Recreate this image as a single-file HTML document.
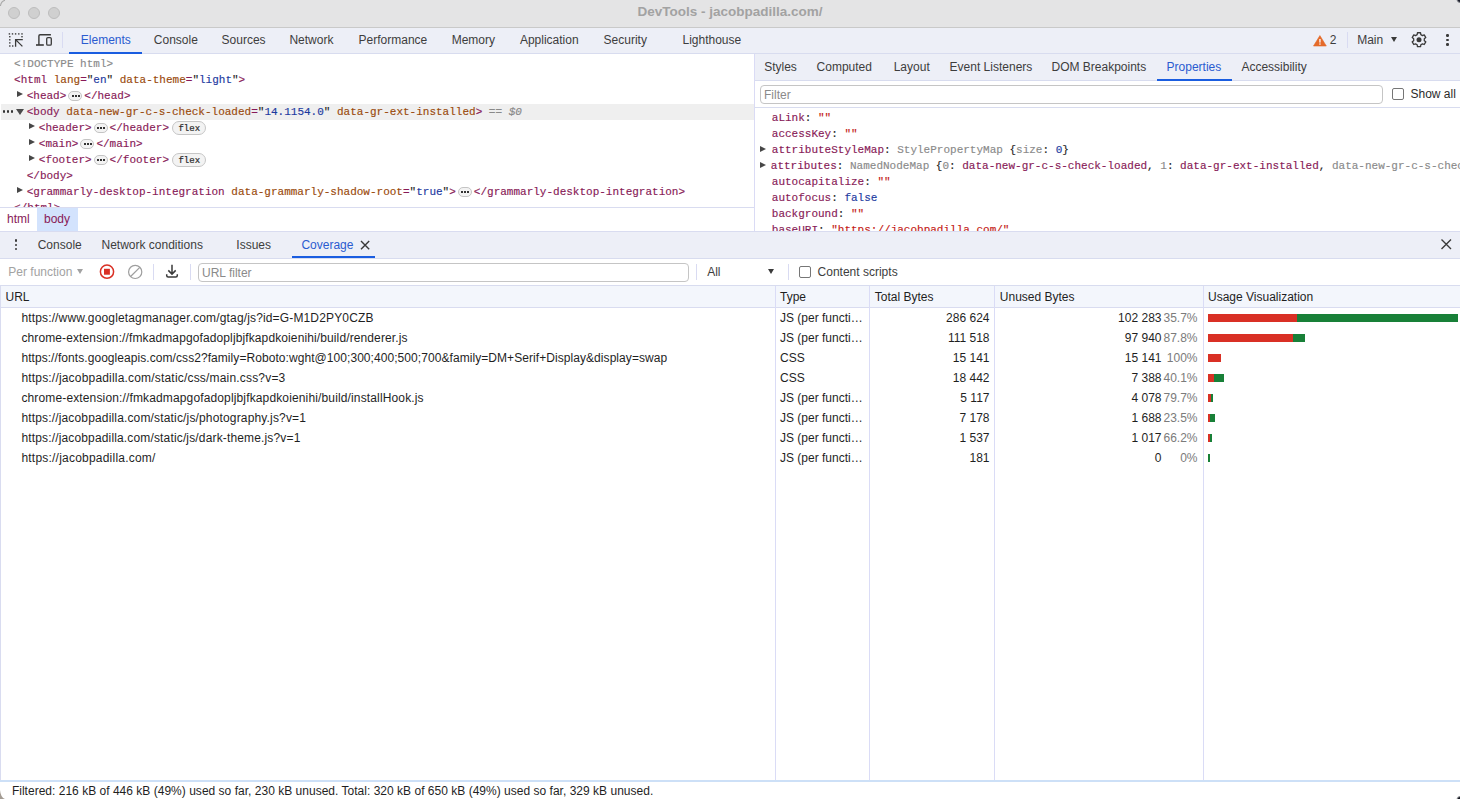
<!DOCTYPE html><html><head><meta charset="utf-8"><style>
*{box-sizing:border-box;margin:0;padding:0}
html,body{width:1460px;height:799px;overflow:hidden;background:#fff}
body{position:relative;font-family:"Liberation Sans",sans-serif;font-size:12px;color:#1f1f1f}
.a{position:absolute}
svg.a{overflow:visible}
.t{position:absolute;white-space:pre;line-height:14px;height:14px}
.tl{position:absolute;top:7px;width:12px;height:12px;border-radius:50%;background:#d0d0d0;border:1px solid #bdbdbd}
.tab{color:#3d3d3d}
.sel{color:#2a5bd0}
.ul{position:absolute;height:2px;background:#1a5de0}
.vsep{position:absolute;width:1px;background:#d9dbf2}
.row{position:absolute;height:16px;line-height:16px;white-space:pre;font-family:"Liberation Mono",monospace;font-size:11px;-webkit-text-stroke:0.15px currentColor}
.tg{color:#881a57}
.an{color:#9a4a0c}
.av{color:#1d3a9f}
.gr{color:#8a8a8a}
.dk{color:#303030}
.pn{color:#881a57}
.sv{color:#c41a16}
.nv{color:#1d3a9f}
.tri{position:absolute;width:0;height:0;border-top:3.9px solid transparent;border-bottom:3.9px solid transparent;border-left:6.3px solid #474747}
.trid{position:absolute;width:0;height:0;border-left:4px solid transparent;border-right:4px solid transparent;border-top:6px solid #4a4a4a}
.pill{display:inline-block;position:relative;vertical-align:top;margin:3px 2px 0 2px;width:14px;height:10px;border:1px solid #c4c4c4;border-radius:5px;background:#f3f3f3;-webkit-text-stroke:0}
.pill:after{content:"";position:absolute;left:2.6px;top:3px;width:2px;height:2px;background:#333;box-shadow:3px 0 0 #333,6px 0 0 #333}
.flex{position:absolute;width:34px;height:14px;border:1px solid #c6c6c6;border-radius:7px;background:#f3f3f3;font-family:"Liberation Mono",monospace;font-size:9px;line-height:14.4px;text-align:center;color:#2a2a2a;-webkit-text-stroke:0.2px #2a2a2a;padding-left:0.5px}
.cell{position:absolute;white-space:pre;line-height:14px;height:14px;color:#1f1f1f}
.r{text-align:right}
.pct{color:#7b7b7b}
.bar{position:absolute;height:8px}
</style></head><body>
<div class="a" style="left:0;top:0;width:1460px;height:28px;background:#e4e4e5;border-bottom:1px solid #c9c9c9"></div>
<div class="tl" style="left:8px"></div>
<div class="tl" style="left:28px"></div>
<div class="tl" style="left:48px"></div>
<div class="t" style="left:0;width:1460px;text-align:center;top:5px;font-weight:bold;font-size:13.5px;color:#a2a2a2">DevTools - jacobpadilla.com/</div>
<svg class="a" style="left:0;top:0" width="10" height="10"><path d="M0.4 6 Q1.2 1.2 5 0.3" stroke="#a9a9a9" stroke-width="1.1" fill="none"/></svg>
<div class="a" style="left:1456px;top:-2px;width:6px;height:5px;border-radius:50%;background:radial-gradient(circle at 70% 30%,#1a1d2a 0,#1a1d2a 35%,rgba(26,29,42,0) 75%)"></div>
<div class="a" style="left:0;top:28px;width:1460px;height:26px;background:#edeff7;border-bottom:1px solid #d8dcef"></div>
<svg class="a" style="left:0;top:0" width="60" height="54" viewBox="0 0 60 54">
<g fill="#3a3a3a"><rect x="8.700000000000001" y="33.2" width="1.4" height="1.4"/><rect x="11.8" y="33.2" width="1.4" height="1.4"/><rect x="14.9" y="33.2" width="1.4" height="1.4"/><rect x="18.1" y="33.2" width="1.4" height="1.4"/><rect x="21.3" y="33.2" width="1.4" height="1.4"/><rect x="9.1" y="36.0" width="1.4" height="1.4"/><rect x="9.1" y="39.099999999999994" width="1.4" height="1.4"/><rect x="9.1" y="42.199999999999996" width="1.4" height="1.4"/><rect x="9.1" y="45.3" width="1.4" height="1.4"/><rect x="21.3" y="36.0" width="1.4" height="1.4"/><rect x="12.0" y="45.3" width="1.4" height="1.4"/></g>
<path d="M15.6 46.8 V39.6 H22.8 M16.1 40.1 L22.4 46.4" stroke="#3a3a3a" stroke-width="1.3" fill="none"/>
<path d="M38.9 45 V36 Q38.9 34.8 40.1 34.8 H50.9" stroke="#3a3a3a" stroke-width="1.4" fill="none"/>
<rect x="36" y="44.2" width="7.8" height="1.6" fill="#3a3a3a"/>
<rect x="46.7" y="37.6" width="4.6" height="7.6" rx="1.2" stroke="#3a3a3a" stroke-width="1.3" fill="none"/>
</svg>
<div class="vsep" style="left:62px;top:32px;height:16px"></div>
<div class="t sel" style="left:80.8px;top:33px;">Elements</div>
<div class="t tab" style="left:153.8px;top:33px;">Console</div>
<div class="t tab" style="left:221.6px;top:33px;">Sources</div>
<div class="t tab" style="left:289.4px;top:33px;">Network</div>
<div class="t tab" style="left:358.6px;top:33px;">Performance</div>
<div class="t tab" style="left:451.7px;top:33px;">Memory</div>
<div class="t tab" style="left:519.9px;top:33px;">Application</div>
<div class="t tab" style="left:603.6px;top:33px;">Security</div>
<div class="t tab" style="left:682.5px;top:33px;">Lighthouse</div>
<div class="ul" style="left:69px;top:52px;width:73px"></div>
<svg class="a" style="left:0;top:0" width="1460" height="54" viewBox="0 0 1460 54">
<path d="M1319.9 35.6 L1326.3 46 H1313.5 Z" fill="#e46a2a" stroke="#e46a2a" stroke-width="0.6" stroke-linejoin="round"/>
<rect x="1319.3" y="39" width="1.3" height="3.6" fill="#fff"/><rect x="1319.3" y="43.4" width="1.3" height="1.3" fill="#fff"/>
<path d="M1417.17 34.62 L1417.45 32.77 L1420.55 32.77 L1420.83 34.62 L1422.49 35.58 L1424.23 34.89 L1425.78 37.58 L1424.31 38.74 L1424.31 40.66 L1425.78 41.82 L1424.23 44.51 L1422.49 43.82 L1420.83 44.78 L1420.55 46.63 L1417.45 46.63 L1417.17 44.78 L1415.51 43.82 L1413.77 44.51 L1412.22 41.82 L1413.69 40.66 L1413.69 38.74 L1412.22 37.58 L1413.77 34.89 L1415.51 35.58 Z" stroke="#3a3a3a" stroke-width="1.3" fill="none" stroke-linejoin="round"/>
<circle cx="1419" cy="39.7" r="2.5" fill="#3a3a3a"/>
</svg>
<div class="t tab" style="left:1329.8px;top:33px;">2</div>
<div class="vsep" style="left:1347px;top:32px;height:16px"></div>
<div class="t tab" style="left:1357.2px;top:33px;">Main</div>
<div class="trid" style="left:1391.3px;top:36.8px;border-left-width:3.65px;border-right-width:3.65px;border-top-width:5.2px;border-top-color:#3a3a3a"></div>
<div class="a" style="left:1446px;top:34.35px;width:2.5px;height:2.5px;border-radius:50%;background:#3a3a3a"></div>
<div class="a" style="left:1446px;top:38.75px;width:2.5px;height:2.5px;border-radius:50%;background:#3a3a3a"></div>
<div class="a" style="left:1446px;top:43.15px;width:2.5px;height:2.5px;border-radius:50%;background:#3a3a3a"></div>
<div class="a" style="left:1px;top:104px;width:753px;height:16px;background:#efefef"></div>
<div class="row" style="left:14.1px;top:56px"><span class="gr">&lt;!DOCTYPE html&gt;</span></div>
<div class="row" style="left:14.1px;top:72px"><span class="tg">&lt;html</span> <span class="an">lang</span><span class="tg">=</span>"<span class="av">en</span>" <span class="an">data-theme</span><span class="tg">=</span>"<span class="av">light</span>"<span class="tg">&gt;</span></div>
<div class="row" style="left:26.7px;top:88px"><span class="tg">&lt;head&gt;</span><span class="pill"></span><span class="tg">&lt;/head&gt;</span></div>
<div class="row" style="left:26.7px;top:104px"><span class="tg">&lt;body</span> <span class="an">data-new-gr-c-s-check-loaded</span><span class="tg">=</span>"<span class="av">14.1154.0</span>" <span class="an">data-gr-ext-installed</span><span class="tg">&gt;</span> <span class="gr">== <i>$0</i></span></div>
<div class="row" style="left:38.8px;top:120px"><span class="tg">&lt;header&gt;</span><span class="pill"></span><span class="tg">&lt;/header&gt;</span></div>
<div class="row" style="left:38.8px;top:136px"><span class="tg">&lt;main&gt;</span><span class="pill"></span><span class="tg">&lt;/main&gt;</span></div>
<div class="row" style="left:38.8px;top:152px"><span class="tg">&lt;footer&gt;</span><span class="pill"></span><span class="tg">&lt;/footer&gt;</span></div>
<div class="row" style="left:26.7px;top:168px"><span class="tg">&lt;/body&gt;</span></div>
<div class="row" style="left:26.7px;top:184px"><span class="tg">&lt;grammarly-desktop-integration</span> <span class="an">data-grammarly-shadow-root</span><span class="tg">=</span>"<span class="av">true</span>"<span class="tg">&gt;</span><span class="pill"></span><span class="tg">&lt;/grammarly-desktop-integration&gt;</span></div>
<div class="row" style="left:14.1px;top:200px"><span class="tg">&lt;/html&gt;</span></div>
<div class="flex" style="left:172px;top:121px">flex</div>
<div class="flex" style="left:172px;top:153px">flex</div>
<div class="tri" style="left:17.3px;top:91px"></div>
<div class="trid" style="left:16px;top:109px"></div>
<div class="a" style="left:2.9999999999999996px;top:110.4px;width:2.2px;height:2.2px;border-radius:50%;background:#333"></div>
<div class="a" style="left:6.9px;top:110.4px;width:2.2px;height:2.2px;border-radius:50%;background:#333"></div>
<div class="a" style="left:10.8px;top:110.4px;width:2.2px;height:2.2px;border-radius:50%;background:#333"></div>
<div class="tri" style="left:29.2px;top:123px"></div>
<div class="tri" style="left:29.2px;top:139px"></div>
<div class="tri" style="left:29.2px;top:155px"></div>
<div class="tri" style="left:17.3px;top:187px"></div>
<div class="a" style="left:0;top:207px;width:754px;height:24px;background:#fff;border-top:1px solid #d9dcf0"></div>
<div class="a" style="left:37px;top:208px;width:41px;height:23px;background:#d3e3fd"></div>
<div class="t " style="left:7px;top:212px;color:#881a57">html</div>
<div class="t " style="left:44px;top:212px;color:#881a57">body</div>
<div class="vsep" style="left:754px;top:54px;height:177px;background:#dadbf5"></div>
<div class="a" style="left:755px;top:54px;width:705px;height:27px;background:#edeff7;border-bottom:1px solid #d8dcef"></div>
<div class="t tab" style="left:764.2px;top:60px;">Styles</div>
<div class="t tab" style="left:816.6px;top:60px;">Computed</div>
<div class="t tab" style="left:893.7px;top:60px;">Layout</div>
<div class="t tab" style="left:949.6px;top:60px;">Event Listeners</div>
<div class="t tab" style="left:1051.5px;top:60px;">DOM Breakpoints</div>
<div class="t sel" style="left:1166.6px;top:60px;">Properties</div>
<div class="t tab" style="left:1241.4px;top:60px;">Accessibility</div>
<div class="ul" style="left:1157px;top:79px;width:75px"></div>
<div class="a" style="left:755px;top:81px;width:705px;height:27px;background:#fff;border-bottom:1px solid #d8dcef"></div>
<div class="a" style="left:760px;top:85px;width:623px;height:19px;border:1px solid #c5c5c5;border-radius:4px;background:#fff"></div>
<div class="t " style="left:764px;top:87.5px;color:#8a8a8a">Filter</div>
<div class="a" style="left:1392px;top:88px;width:12px;height:12px;border:1px solid #767676;border-radius:2px;background:#fff"></div>
<div class="t " style="left:1410.5px;top:86.6px;color:#2b2b2b">Show all</div>
<div class="row" style="left:771.8px;top:110px;width:688.2px;overflow:hidden"><span class="pn">aLink</span>: <span class="sv">""</span></div>
<div class="row" style="left:771.8px;top:126px;width:688.2px;overflow:hidden"><span class="pn">accessKey</span>: <span class="sv">""</span></div>
<div class="row" style="left:771.8px;top:142px;width:688.2px;overflow:hidden"><span class="pn">attributeStyleMap</span>: <span class="gr">StylePropertyMap</span> {<span class="gr">size</span>: <span class="nv">0</span>}</div>
<div class="row" style="left:770.8px;top:158px;width:689.2px;overflow:hidden"><span class="pn">attributes</span>: <span class="gr">NamedNodeMap</span> {<span class="gr">0</span>: <span class="pn">data-new-gr-c-s-check-loaded</span>, <span class="gr">1</span>: <span class="pn">data-gr-ext-installed</span>, <span class="gr">data-new-gr-c-s-check-loaded: data-new-gr-c-s-check-loaded</span></div>
<div class="row" style="left:771.8px;top:174px;width:688.2px;overflow:hidden"><span class="pn">autocapitalize</span>: <span class="sv">""</span></div>
<div class="row" style="left:771.8px;top:190px;width:688.2px;overflow:hidden"><span class="pn">autofocus</span>: <span class="nv">false</span></div>
<div class="row" style="left:771.8px;top:206px;width:688.2px;overflow:hidden"><span class="pn">background</span>: <span class="sv">""</span></div>
<div class="row" style="left:771.8px;top:222px;width:688.2px;overflow:hidden"><span class="pn">baseURI</span>: <span class="sv">"https://jacobpadilla.com/"</span></div>
<div class="tri" style="left:759.6px;top:145.5px"></div>
<div class="tri" style="left:759.6px;top:161.5px"></div>
<div class="a" style="left:0;top:231px;width:1460px;height:28px;background:#edeff7;border-top:1px solid #d9dcf0;border-bottom:1px solid #d8dcef"></div>
<div class="a" style="left:14.6px;top:239.20000000000002px;width:2.4px;height:2.4px;border-radius:50%;background:#3a3a3a"></div>
<div class="a" style="left:14.6px;top:243.60000000000002px;width:2.4px;height:2.4px;border-radius:50%;background:#3a3a3a"></div>
<div class="a" style="left:14.6px;top:248.10000000000002px;width:2.4px;height:2.4px;border-radius:50%;background:#3a3a3a"></div>
<div class="t tab" style="left:37.7px;top:238px;">Console</div>
<div class="t tab" style="left:101.5px;top:238px;">Network conditions</div>
<div class="t tab" style="left:236.3px;top:238px;">Issues</div>
<div class="t sel" style="left:301.4px;top:238px;">Coverage</div>
<svg class="a" style="left:0;top:0" width="1460" height="260" viewBox="0 0 1460 260">
<path d="M361 241 L369.2 249.2 M369.2 241 L361 249.2" stroke="#3a3a3a" stroke-width="1.4"/>
<path d="M1441.5 239.5 L1451 249 M1451 239.5 L1441.5 249" stroke="#3a3a3a" stroke-width="1.4"/>
</svg>
<div class="ul" style="left:292px;top:256px;width:83px"></div>
<div class="a" style="left:0;top:259px;width:1460px;height:27px;background:#fff;border-bottom:1px solid #d8dcef"></div>
<div class="t " style="left:8.3px;top:265px;color:#a2a2a2">Per function</div>
<div class="trid" style="left:76.7px;top:268.5px;border-top-color:#a2a2a2;border-left-width:3.4px;border-right-width:3.4px;border-top-width:5px"></div>
<svg class="a" style="left:0;top:0" width="200" height="290" viewBox="0 0 200 290">
<circle cx="107" cy="271.7" r="6.6" stroke="#d93025" stroke-width="1.5" fill="none"/><rect x="104" y="268.8" width="5.9" height="5.9" fill="#d93025"/>
<circle cx="135.2" cy="271.9" r="6.6" stroke="#9e9e9e" stroke-width="1.2" fill="none"/><path d="M130.6 276.5 L139.8 267.3" stroke="#9e9e9e" stroke-width="1.2"/>
<path d="M172 264.8 V274 M168.3 270.4 L172 274.1 L175.7 270.4" stroke="#3a3a3a" stroke-width="1.5" fill="none"/>
<path d="M166.7 274.3 V275.5 Q166.7 277 168.2 277 H175.8 Q177.3 277 177.3 275.5 V274.3" stroke="#3a3a3a" stroke-width="1.5" fill="none"/>
</svg>
<div class="vsep" style="left:153px;top:264px;height:16px"></div>
<div class="vsep" style="left:190px;top:264px;height:16px"></div>
<div class="a" style="left:198px;top:263px;width:491px;height:19px;border:1px solid #c5c5c5;border-radius:4px;background:#fff"></div>
<div class="t " style="left:202px;top:266px;color:#8a8a8a">URL filter</div>
<div class="vsep" style="left:696px;top:264px;height:16px"></div>
<div class="t tab" style="left:707.2px;top:265.2px;">All</div>
<div class="trid" style="left:767.5px;top:268.5px;border-left-width:3.7px;border-right-width:3.7px;border-top-width:5.3px;border-top-color:#3a3a3a"></div>
<div class="vsep" style="left:788px;top:264px;height:16px"></div>
<div class="a" style="left:799px;top:266px;width:12px;height:12px;border:1px solid #767676;border-radius:2px;background:#fff"></div>
<div class="t tab" style="left:817.6px;top:265.2px;">Content scripts</div>
<div class="a" style="left:0;top:286px;width:1460px;height:22px;background:#f3f6fc;border-bottom:1px solid #d9dcf0"></div>
<div class="a" style="left:0;top:286px;width:1px;height:494px;background:#d9dcf0"></div>
<div class="vsep" style="left:775px;top:286px;height:494px;background:#dadcf6"></div>
<div class="vsep" style="left:869px;top:286px;height:494px;background:#dadcf6"></div>
<div class="vsep" style="left:994px;top:286px;height:494px;background:#dadcf6"></div>
<div class="vsep" style="left:1203px;top:286px;height:494px;background:#dadcf6"></div>
<div class="t " style="left:5.5px;top:290px;color:#1f1f1f">URL</div>
<div class="t " style="left:780px;top:290px;color:#1f1f1f">Type</div>
<div class="t " style="left:874.8px;top:290px;color:#1f1f1f">Total Bytes</div>
<div class="t " style="left:999.8px;top:290px;color:#1f1f1f">Unused Bytes</div>
<div class="t " style="left:1208px;top:290px;color:#1f1f1f">Usage Visualization</div>
<div class="t " style="left:21.4px;top:310.5px;letter-spacing:0.149px;">https://www.googletagmanager.com/gtag/js?id=G-M1D2PY0CZB</div>
<div class="t " style="left:780px;top:310.5px;">JS (per functi…</div>
<div class="cell r" style="left:870px;width:119.5px;top:310.5px">286 624</div>
<div class="cell r" style="left:995px;width:166.5px;top:310.5px">102 283</div>
<div class="cell r pct" style="left:1150px;width:47.5px;top:310.5px">35.7%</div>
<div class="bar" style="left:1208px;width:88.5px;top:314.0px;background:#d93025"></div>
<div class="bar" style="left:1296.5px;width:161.5px;top:314.0px;background:#188038"></div>
<div class="t " style="left:21.4px;top:330.5px;letter-spacing:0.116px;">chrome-extension://fmkadmapgofadopljbjfkapdkoienihi/build/renderer.js</div>
<div class="t " style="left:780px;top:330.5px;">JS (per functi…</div>
<div class="cell r" style="left:870px;width:119.5px;top:330.5px">111 518</div>
<div class="cell r" style="left:995px;width:166.5px;top:330.5px">97 940</div>
<div class="cell r pct" style="left:1150px;width:47.5px;top:330.5px">87.8%</div>
<div class="bar" style="left:1208px;width:85.20000000000005px;top:334.0px;background:#d93025"></div>
<div class="bar" style="left:1293.2px;width:11.799999999999955px;top:334.0px;background:#188038"></div>
<div class="t " style="left:21.4px;top:350.5px;letter-spacing:0.064px;">https://fonts.googleapis.com/css2?family=Roboto:wght@100;300;400;500;700&amp;family=DM+Serif+Display&amp;display=swap</div>
<div class="t " style="left:780px;top:350.5px;">CSS</div>
<div class="cell r" style="left:870px;width:119.5px;top:350.5px">15 141</div>
<div class="cell r" style="left:995px;width:166.5px;top:350.5px">15 141</div>
<div class="cell r pct" style="left:1150px;width:47.5px;top:350.5px">100%</div>
<div class="bar" style="left:1208px;width:13px;top:354.0px;background:#d93025"></div>
<div class="t " style="left:21.4px;top:370.5px;letter-spacing:0.187px;">https://jacobpadilla.com/static/css/main.css?v=3</div>
<div class="t " style="left:780px;top:370.5px;">CSS</div>
<div class="cell r" style="left:870px;width:119.5px;top:370.5px">18 442</div>
<div class="cell r" style="left:995px;width:166.5px;top:370.5px">7 388</div>
<div class="cell r pct" style="left:1150px;width:47.5px;top:370.5px">40.1%</div>
<div class="bar" style="left:1208px;width:6px;top:374.0px;background:#d93025"></div>
<div class="bar" style="left:1214px;width:10px;top:374.0px;background:#188038"></div>
<div class="t " style="left:21.4px;top:390.5px;letter-spacing:0.140px;">chrome-extension://fmkadmapgofadopljbjfkapdkoienihi/build/installHook.js</div>
<div class="t " style="left:780px;top:390.5px;">JS (per functi…</div>
<div class="cell r" style="left:870px;width:119.5px;top:390.5px">5 117</div>
<div class="cell r" style="left:995px;width:166.5px;top:390.5px">4 078</div>
<div class="cell r pct" style="left:1150px;width:47.5px;top:390.5px">79.7%</div>
<div class="bar" style="left:1208px;width:3.2999999999999545px;top:394.0px;background:#d93025"></div>
<div class="bar" style="left:1211.3px;width:1.7000000000000455px;top:394.0px;background:#188038"></div>
<div class="t " style="left:21.4px;top:410.5px;letter-spacing:0.159px;">https://jacobpadilla.com/static/js/photography.js?v=1</div>
<div class="t " style="left:780px;top:410.5px;">JS (per functi…</div>
<div class="cell r" style="left:870px;width:119.5px;top:410.5px">7 178</div>
<div class="cell r" style="left:995px;width:166.5px;top:410.5px">1 688</div>
<div class="cell r pct" style="left:1150px;width:47.5px;top:410.5px">23.5%</div>
<div class="bar" style="left:1208px;width:2px;top:414.0px;background:#d93025"></div>
<div class="bar" style="left:1210px;width:5px;top:414.0px;background:#188038"></div>
<div class="t " style="left:21.4px;top:430.5px;letter-spacing:0.153px;">https://jacobpadilla.com/static/js/dark-theme.js?v=1</div>
<div class="t " style="left:780px;top:430.5px;">JS (per functi…</div>
<div class="cell r" style="left:870px;width:119.5px;top:430.5px">1 537</div>
<div class="cell r" style="left:995px;width:166.5px;top:430.5px">1 017</div>
<div class="cell r pct" style="left:1150px;width:47.5px;top:430.5px">66.2%</div>
<div class="bar" style="left:1208px;width:2px;top:434.0px;background:#d93025"></div>
<div class="bar" style="left:1210px;width:2px;top:434.0px;background:#188038"></div>
<div class="t " style="left:21.4px;top:450.5px;letter-spacing:0.219px;">https://jacobpadilla.com/</div>
<div class="t " style="left:780px;top:450.5px;">JS (per functi…</div>
<div class="cell r" style="left:870px;width:119.5px;top:450.5px">181</div>
<div class="cell r" style="left:995px;width:166.5px;top:450.5px">0</div>
<div class="cell r pct" style="left:1150px;width:47.5px;top:450.5px">0%</div>
<div class="bar" style="left:1208px;width:2px;top:454.0px;background:#188038"></div>
<div class="a" style="left:0;top:780px;width:1460px;height:2px;background:#cde0f7"></div>
<div class="t " style="left:11.9px;top:783.5px;letter-spacing:0.016px;color:#1f1f1f">Filtered: 216 kB of 446 kB (49%) used so far, 230 kB unused. Total: 320 kB of 650 kB (49%) used so far, 329 kB unused.</div>
<svg class="a" style="left:0;top:790px" width="10" height="9"><path d="M0 0 Q0.6 7.5 5 9 L0 9 Z" fill="#a39b93"/></svg>
<div class="a" style="left:1456px;top:796px;width:6px;height:5px;border-radius:50%;background:radial-gradient(circle at 70% 70%,#10131c 0,#10131c 35%,rgba(16,19,28,0) 75%)"></div>
</body></html>
